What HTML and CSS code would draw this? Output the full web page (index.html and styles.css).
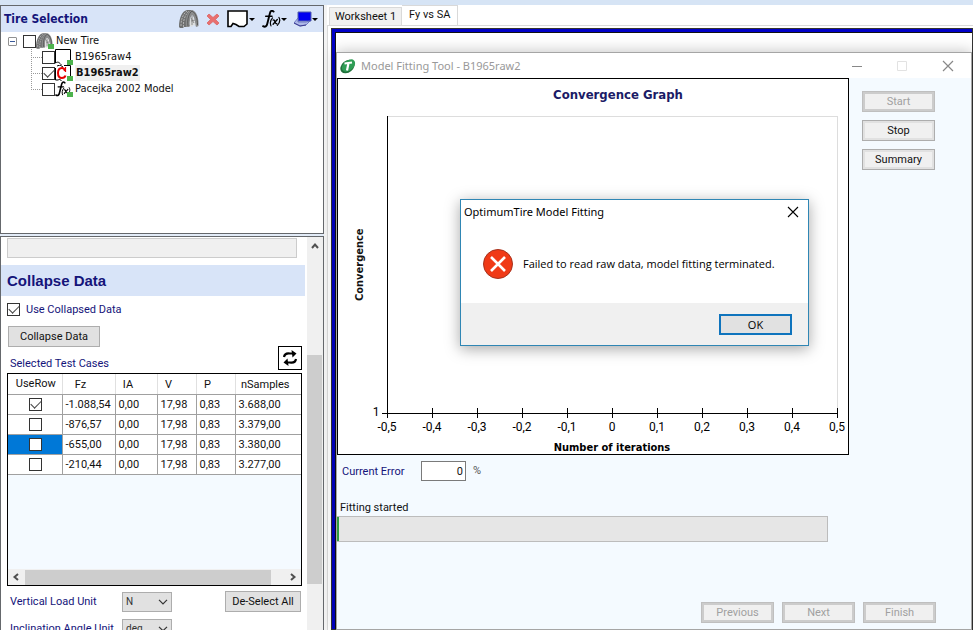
FILE: index.html
```html
<!DOCTYPE html>
<html lang="en">
<head>
<meta charset="utf-8">
<title>OptimumTire</title>
<link rel="stylesheet" href="styles.css">
</head>
<body>
<svg class="defs" aria-hidden="true">
  <symbol id="tire" viewBox="0 0 20 18">
    <path d="M0 17C0 8 3 1 8 0h5c-4 3-6 9-5 17H5l-1 1H1z" fill="#6f7070"/>
    <path d="M2 16C2 9 4 4 8 1M4.500 17C4 10 6 5 10 1" fill="none" stroke="#b5b5b5" stroke-width="1" stroke-dasharray="2 1"/>
    <path d="M7 17C6 8 9 1 13 0c5 1 7 9 6.500 16l-2 1-1-1C16 10 15 6 13 5.500 11 7 10.500 12 11 16l-1 1z" fill="#8b8c8c"/>
    <path d="M11 16c-.5-5 .5-9 2-10.500C15 7 16 11 16.500 16l-2-1-1.500 2z" fill="#dcdede"/>
    <path d="M9 16c-1-7 1-13 4-15 4 2 5.500 8 5.500 14" fill="none" stroke="#4c4d4d" stroke-width=".8"/>
    <path d="M13 6v9M12 11l4-1M12 8l3 5" stroke="#777" stroke-width=".8"/>
  </symbol>
  <symbol id="fx" viewBox="0 0 18 17">
    <g fill="none" stroke="#000" stroke-linecap="round">
      <path d="M11 1.500C9.500-.2 8 1 7.500 3L5 13c-.5 2.500-2 3.500-4 2.300" stroke-width="1.800"/>
      <path d="M3.500 6h6" stroke-width="1.400"/>
      <path d="M10 7.500c-2 2-2.500 5-1.500 7.500M16 7c1.500 2.500.5 5.500-1.500 7.500" stroke-width="1.100"/>
      <path d="M10.500 9.500c2-1 1.500 4 3.500 3.500M14.500 9l-4 4.500" stroke-width="1.300"/>
    </g>
  </symbol>
  <symbol id="page" viewBox="0 0 22 18">
    <path d="M1 1h19v13l-3 2.500h-5L9 14.500 6 13.500 4 16.500H1z" fill="#fff" stroke="#000" stroke-width="1.600"/>
  </symbol>
  <symbol id="chevron" viewBox="0 0 10 6"><path d="M1 .8l4 4 4-4" fill="none" stroke="currentColor" stroke-width="1.200"/></symbol>
  <symbol id="arrow" viewBox="0 0 8 8"><path d="M1 6l3-3.500L7 6" fill="none" stroke="currentColor" stroke-width="2"/></symbol>
</svg>

<div class="app">
  <aside class="sidebar">
    <section class="panel">
      <header class="panel-head">
        <h2>Tire Selection</h2>
        <div class="tools">
          <button aria-label="New tire"><svg width="20" height="18"><use href="#tire"/></svg></button>
          <button aria-label="Delete"><svg width="14" height="13" viewBox="0 0 14 13"><path d="M3 1l4 3.500L11 1l2 2-3.500 3.500L13 10l-2 2-4-3.500L3 12l-2-2 3.500-3.500L1 3z" fill="#e8706f" stroke="#dc6465" stroke-width=".8"/></svg></button>
          <button class="drop" aria-label="Data"><svg width="22" height="18"><use href="#page"/></svg></button>
          <button class="drop" aria-label="Function"><svg width="19" height="18"><use href="#fx"/></svg></button>
          <button class="drop" aria-label="Display"><svg width="18" height="16" viewBox="0 0 18 16"><path d="M4 1h13v9H4z" fill="#0000f0" stroke="#5560a8"/><path d="M0 12l4-5v4h8l4-1-4 4-6 1z" fill="#aeb8e8" stroke="#5a67b8" stroke-width=".8"/><path d="M0 12l6 3 6-1" fill="none" stroke="#3b3b90"/></svg></button>
        </div>
      </header>
      <ul class="tree">
        <li>
          <div class="node">
            <span class="expander"></span>
            <input type="checkbox" id="n0">
            <span class="node-icon"><svg width="17" height="16"><use href="#tire"/></svg></span>
            <label for="n0">New Tire</label>
          </div>
          <ul>
            <li class="node">
              <input type="checkbox" id="n1">
              <span class="node-icon"><svg width="16" height="16" viewBox="0 0 16 16"><path d="M.5.500h15V16M.5.500V14c3-2 4 0 6 2" fill="#fff" stroke="#000"/></svg></span>
              <label for="n1">B1965raw4</label>
            </li>
            <li class="node selected">
              <input type="checkbox" id="n2" checked>
              <span class="node-icon"><svg width="16" height="16" viewBox="0 0 16 16"><path d="M.5 3v12h3l1-1 2 2M2 1l3-1 3 2M9 .5h6.500V12" fill="none" stroke="#000"/><path d="M10 6c-.5-2-1.500-3-3-3C4.500 3 3 5 3 8s1.500 5 4 5c1.500 0 3-1 3.500-2.500" fill="none" stroke="#e60000" stroke-width="2"/><path d="M10.500 2v5" stroke="#e60000" stroke-width="1.200"/></svg></span>
              <label for="n2">B1965raw2</label>
            </li>
            <li class="node">
              <input type="checkbox" id="n3">
              <span class="node-icon"><svg width="16" height="16"><use href="#fx"/></svg></span>
              <label for="n3">Pacejka 2002 Model</label>
            </li>
          </ul>
        </li>
      </ul>
    </section>

    <section class="panel settings">
      <div class="form">
        <input class="readout" type="text" aria-label="Value" disabled>
        <h2 class="band">Collapse Data</h2>
        <div class="fields">
          <div class="check-line"><input type="checkbox" id="ucd" checked><label for="ucd">Use Collapsed Data</label></div>
          <button class="btn flat collapse">Collapse Data</button>
          <div class="cases-head">
            <span>Selected Test Cases</span>
            <button class="refresh" aria-label="Refresh"><svg width="16" height="16" viewBox="0 0 16 16"><g fill="none" stroke="#000" stroke-width="2.200"><path d="M2 7c.5-3 3-4 6-3.500h4"/><path d="M14 9c-.5 3-3 4-6 3.500H4"/></g><path d="M9.500 0l5 3.500-4 4zM6.500 16l-5-3.500 4-4z"/></svg></button>
          </div>
          <div class="grid-box">
            <table>
              <thead><tr><th class="c-use">UseRow</th><th class="c-fz">Fz</th><th class="c-ia">IA</th><th class="c-v">V</th><th class="c-p">P</th><th class="c-n">nSamples</th></tr></thead>
              <tbody>
                <tr><td><input type="checkbox" aria-label="Use row 1" checked></td><td>-1.088,54</td><td>0,00</td><td>17,98</td><td>0,83</td><td>3.688,00</td></tr>
                <tr><td><input type="checkbox" aria-label="Use row 2"></td><td>-876,57</td><td>0,00</td><td>17,98</td><td>0,83</td><td>3.379,00</td></tr>
                <tr><td class="current"><input type="checkbox" aria-label="Use row 3"></td><td>-655,00</td><td>0,00</td><td>17,98</td><td>0,83</td><td>3.380,00</td></tr>
                <tr><td><input type="checkbox" aria-label="Use row 4"></td><td>-210,44</td><td>0,00</td><td>17,98</td><td>0,83</td><td>3.277,00</td></tr>
              </tbody>
            </table>
            <div class="hbar">
              <svg class="left" width="8" height="8"><use href="#arrow"/></svg>
              <span class="track"><span class="thumb"></span></span>
              <svg class="right" width="8" height="8"><use href="#arrow"/></svg>
            </div>
          </div>
          <div class="unit-line">
            <label for="vlu">Vertical Load Unit</label>
            <span class="select"><select id="vlu"><option>N</option></select><svg width="10" height="6"><use href="#chevron"/></svg></span>
            <button class="btn flat deselect">De-Select All</button>
          </div>
          <div class="unit-line">
            <label for="iau">Inclination Angle Unit</label>
            <span class="select"><select id="iau"><option>deg</option></select><svg width="10" height="6"><use href="#chevron"/></svg></span>
          </div>
        </div>
      </div>
      <div class="vbar">
        <svg width="8" height="8"><use href="#arrow"/></svg>
        <span class="thumb"></span>
      </div>
    </section>
  </aside>

  <main class="work">
    <nav class="tabs">
      <a href="#ws1">Worksheet 1</a>
      <a href="#fysa" class="active">Fy vs SA</a>
    </nav>
    <div class="page">
      <div class="sheet">
        <section class="window">
          <header class="titlebar">
            <svg width="16" height="16" viewBox="0 0 16 16"><ellipse cx="7.500" cy="8.500" rx="8" ry="5.800" transform="rotate(-40 7.500 8.500)" fill="#20713b"/><ellipse cx="8.500" cy="7.500" rx="7.500" ry="5" transform="rotate(-40 8.500 7.500)" fill="#2f9d55"/><path d="M4.500 5.500l7.500-1M8.500 5l-1.500 7.500" stroke="#fff" stroke-width="2.200"/></svg>
            <h1>Model Fitting Tool - B1965raw2</h1>
            <svg class="controls" width="102" height="12" viewBox="0 0 102 12" fill="none"><path d="M0 6.500h10" stroke="#888"/><path d="M45.500 1.500h9v9h-9z" stroke="#e2e2e2"/><path d="M91 1l10 10M101 1L91 11" stroke="#888" stroke-width="1.200"/></svg>
          </header>
          <div class="body">
            <div class="top">
              <figure class="chart">
                <figcaption>Convergence Graph</figcaption>
                <div class="plot-row">
                  <span class="y-title">Convergence</span>
                  <svg class="plot" height="330">
                    <g class="frame"><line x1="0" y1="0.500" x2="100%" y2="0.500"/><line x1="100%" y1="0" x2="100%" y2="297"/></g>
                    <g class="axis">
                      <line x1="0" y1="0" x2="0" y2="302"/><line x1="-5" y1="297" x2="100%" y2="297"/>
                      <line x1="10%" x2="10%" y1="292" y2="302"/><line x1="20%" x2="20%" y1="292" y2="302"/><line x1="30%" x2="30%" y1="292" y2="302"/><line x1="40%" x2="40%" y1="292" y2="302"/><line x1="50%" x2="50%" y1="292" y2="302"/><line x1="60%" x2="60%" y1="292" y2="302"/><line x1="70%" x2="70%" y1="292" y2="302"/><line x1="80%" x2="80%" y1="292" y2="302"/><line x1="90%" x2="90%" y1="292" y2="302"/><line x1="100%" x2="100%" y1="292" y2="302"/>
                    </g>
                    <g class="ticks">
                      <text x="-11" y="300">1</text>
                      <text x="0" y="315">-0,5</text><text x="10%" y="315">-0,4</text><text x="20%" y="315">-0,3</text><text x="30%" y="315">-0,2</text><text x="40%" y="315">-0,1</text><text x="50%" y="315">0</text><text x="60%" y="315">0,1</text><text x="70%" y="315">0,2</text><text x="80%" y="315">0,3</text><text x="90%" y="315">0,4</text><text x="100%" y="315">0,5</text>
                    </g>
                    <text class="x-title" x="50%" y="335">Number of iterations</text>
                  </svg>
                </div>
              </figure>
              <div class="side">
                <button class="btn" disabled>Start</button>
                <button class="btn">Stop</button>
                <button class="btn">Summary</button>
              </div>
            </div>
            <div class="error-line">
              <label for="err">Current Error</label>
              <input id="err" type="text" value="0">
              <span class="unit">%</span>
            </div>
            <p class="status">Fitting started</p>
            <div class="progress"><span class="done"></span></div>
            <footer class="wizard">
              <button class="btn" disabled>Previous</button>
              <button class="btn" disabled>Next</button>
              <button class="btn" disabled>Finish</button>
            </footer>
          </div>
          <div class="dialog" role="alertdialog" aria-labelledby="dt">
            <header>
              <h2 id="dt">OptimumTire Model Fitting</h2>
              <button class="close" aria-label="Close"><svg width="12" height="12" viewBox="0 0 12 12"><path d="M1 1l10 10M11 1L1 11" stroke="#000" stroke-width="1.100"/></svg></button>
            </header>
            <div class="message">
              <svg width="30" height="30" viewBox="0 0 30 30"><circle cx="15" cy="15" r="14.500" fill="#f03a17" stroke="#a5331f"/><path d="M8 8l14 14M22 8L8 22" stroke="#fff" stroke-width="2.600"/></svg>
              <p>Failed to read raw data, model fitting terminated.</p>
            </div>
            <footer><button class="ok">OK</button></footer>
          </div>
        </section>
      </div>
    </div>
  </main>
</div>
</body>
</html>
```
FILE: styles.css
```css
* { box-sizing: border-box; }

:root {
  --ui: Roboto, "Liberation Sans", sans-serif;
  --tahoma: "DejaVu Sans Condensed", "DejaVu Sans", sans-serif;
  --segoe: "Open Sans", "Noto Sans", sans-serif;
  --title: "Noto Sans", "Open Sans", sans-serif;
  --navy: #14147a;
  --band: #d8e4f8;
  --pale: #f4faff;
}

body {
  margin: 0;
  height: 100vh;
  overflow: hidden;
  background: #f4f4f4;
  color: #111;
  font: 11px/16px var(--ui);
}

h1, h2, p, ul, figure { margin: 0; padding: 0; }
ul { list-style: none; }
button, input, select { font: inherit; color: inherit; margin: 0; }
button { padding: 0; }
svg { display: block; flex: none; }
.defs { position: absolute; width: 0; height: 0; }

.app {
  display: grid;
  grid-template-columns: 324px minmax(0, 1fr);
  height: 100vh;
  border-top: 5px solid #d6e4f5;
}

/* sidebar */
.sidebar { display: flex; flex-direction: column; gap: 2px; min-height: 0; background: #e3ecf8; }
.panel { height: 229px; flex: none; border: 1px solid #65686c; background: #fff; }
.panel-head {
  display: flex;
  align-items: center;
  justify-content: space-between;
  height: 26px;
  padding: 0 5px 0 3px;
  background: var(--band);
}
.panel-head h2 { font: bold 12px/16px var(--tahoma); color: var(--navy); }
.tools { display: flex; align-items: center; gap: 7px; }
.tools button { display: flex; align-items: center; border: 0; background: none; }
.drop::after {
  content: "";
  border: 3px solid transparent;
  border-top-color: #000;
  border-bottom: 0;
}

input[type="checkbox"] {
  appearance: none;
  display: block;
  flex: none;
  width: 13px;
  height: 13px;
  border: 1px solid #333;
  background: #fff;
}
input[type="checkbox"]:checked::before {
  content: "";
  display: block;
  width: 9px;
  height: 5px;
  margin: 2px 1px;
  border: solid #444;
  border-width: 0 0 1px 1px;
  transform: translateY(-1px) rotate(-45deg);
}

.tree { padding: 1px 0 0 7px; font-family: var(--tahoma); }
.node { display: flex; align-items: center; height: 16px; }
.expander {
  width: 9px;
  height: 9px;
  margin-right: 6px;
  border: 1px solid #919191;
  border-radius: 1px;
  background: linear-gradient(#3b5a9a, #3b5a9a) center / 5px 1px no-repeat, #fff;
}
.tree ul { margin-left: 23px; }
.tree ul .node::before {
  content: "";
  width: 11px;
  height: 16px;
  background:
    repeating-linear-gradient(90deg, #999 0 1px, transparent 1px 2px) 0 8px / 11px 1px no-repeat,
    repeating-linear-gradient(#999 0 1px, transparent 1px 2px) 0 0 / 1px 16px no-repeat;
}
.tree ul .node:last-child::before { background-size: 11px 1px, 1px 8px; }
.node-icon { position: relative; width: 18px; height: 16px; margin-right: 2px; }
.node-icon::after {
  content: "";
  position: absolute;
  right: 0;
  bottom: 0;
  width: 6px;
  height: 5px;
  background: #4db34d;
}
.selected label { padding: 0 1px; background: #f0f0f0; font-weight: bold; }

.settings { display: flex; flex: 1; height: auto; min-height: 0; border-bottom: 0; overflow: hidden; }
.form { flex: 1; min-width: 0; color: var(--navy); }
.readout { display: block; width: 290px; height: 20px; margin: 1px 0 7px 6px; border: 1px solid #ccc; background: #f0f0f0; }
.band { height: 31px; margin-right: 2px; padding-left: 6px; background: var(--band); font: bold 15px/32px "Liberation Sans", sans-serif; }
.fields { padding: 7px 5px 0 6px; }
.check-line { display: flex; align-items: center; gap: 6px; height: 13px; }
.btn {
  width: 73px;
  height: 21px;
  padding-top: 1px;
  border: 1px solid #adadad;
  background: #f0f0f0;
  box-shadow: inset 0 0 0 2px #e1e1e1;
  color: #111;
}
.btn:disabled { color: #a0a0a0; border-color: #bfbfbf; box-shadow: inset 0 0 0 2px #ccc; }
.flat { background: #e1e1e1; }
.collapse { display: block; width: 92px; margin: 10px 0 0 1px; }
.cases-head { display: flex; align-items: flex-end; justify-content: space-between; height: 23px; padding-left: 3px; }
.cases-head span { margin-bottom: -2px; }
.refresh { display: grid; place-items: center; width: 24px; height: 24px; border: 1px solid #000; background: #fff; }

.grid-box { display: flex; flex-direction: column; height: 213px; margin-top: 3px; border: 1px solid #000; background: var(--pale); color: #111; overflow: hidden; }
table { width: 100%; border-collapse: collapse; table-layout: fixed; background: #fff; }
th { height: 20px; padding: 2px 0 0; border-left: 1px solid #e0e0e0; border-bottom: 1px solid #a0a0a0; font-weight: normal; }
td { height: 20px; padding: 2px 0 0 3px; border: 1px solid #a0a0a0; line-height: 16px; }
tr > :first-child { border-left: 0; padding: 0 0 0 2px; }
tr > :last-child { border-right: 0; }
td input[type="checkbox"] { margin: 0 auto; }
.current { background: #0078d7; }
.c-use { width: 54px; }
.c-fz { width: 53px; padding-right: 16px; }
.c-ia { width: 42px; padding-right: 16px; }
.c-v { width: 39px; padding-right: 16px; }
.c-p { width: 39px; padding-right: 16px; }
.c-n { padding-right: 6px; }
.hbar { display: flex; align-items: center; gap: 5px; height: 16px; margin-top: auto; padding: 0 4px; background: #f0f0f0; color: #505050; }
.track { flex: 1; height: 15px; }
.track .thumb { display: block; width: 95%; height: 15px; background: #cdcdcd; }
.left { transform: rotate(-90deg); }
.right { transform: rotate(90deg); }

.unit-line { display: flex; align-items: center; height: 21px; margin: 5px 0 6px; padding: 0 1px 0 3px; }
.unit-line label { width: 112px; padding-top: 1px; }
.select { display: flex; align-items: center; color: #333; }
.select select { appearance: none; width: 50px; height: 20px; padding: 0 3px; border: 1px solid #adadad; border-radius: 0; background: #e1e1e1; font-size: 10px; }
.select svg { margin-left: -14px; margin-right: 4px; pointer-events: none; }
.deselect { width: 76px; margin-left: auto; }

.vbar { display: flex; flex-direction: column; align-items: center; gap: 105px; width: 16px; padding-top: 5px; background: #f0f0f0; color: #505050; }
.vbar .thumb { align-self: flex-start; width: 15px; height: 229px; background: #cdcdcd; }

/* worksheet area */
.work { display: flex; flex-direction: column; min-width: 0; padding-left: 3px; }
.tabs { display: flex; align-items: flex-end; height: 20px; padding-left: 2px; background: #fff; }
.tabs a { height: 18px; padding: 1px 5px 0; border: 1px solid #d9d9d9; border-bottom: 0; background: #f0f0f0; color: inherit; text-decoration: none; }
.tabs .active { height: 20px; padding: 1px 7px 0; border-left: 0; background: #fff; }
.page { flex: 1; min-height: 0; padding: 2px 0 0 3px; border: solid #d9d9d9; border-width: 1px 0 0 1px; background: #fff; }
.sheet { height: 100%; padding: 20px 1px 0 0; border: solid #0000c8; border-width: 4px 0 0 4px; background: #fff; outline: 1px solid #333; outline-offset: -1px; box-shadow: inset 1px 1px #111; }

.window { position: relative; display: flex; flex-direction: column; height: 100%; margin-left: 1px; border: 1px solid #a5a5a5; background: var(--pale); box-shadow: 0 0 14px rgba(0, 0, 0, .25); }
.titlebar { display: flex; align-items: center; gap: 5px; height: 25px; padding: 0 17px 0 3px; background: #fff; }
.titlebar h1 { flex: 1; font: 11px/16px var(--title); color: #999; }
.body { display: flex; flex: 1; flex-direction: column; min-height: 0; }
.top { display: flex; }
.chart { flex: 1; min-width: 0; height: 377px; border: 1px solid #000; background: #fff; }
.chart figcaption { padding: 7px 0 13px; padding-left: 50px; text-align: center; font: bold 13px/17px var(--tahoma); color: #1b1b66; }
.plot-row { display: flex; padding-right: 11px; }
.y-title { width: 16px; height: 297px; margin: 0 19px 0 14px; writing-mode: vertical-rl; transform: rotate(180deg); text-align: center; font: bold 11px/16px var(--tahoma); }
.plot { flex: 1; min-width: 0; overflow: visible; }
.plot line { stroke: #000; stroke-width: 1; shape-rendering: crispEdges; }
.plot .frame line { stroke: #ddd; }
.plot text { text-anchor: middle; font: 12px var(--ui); }
.plot .x-title { font: bold 11px var(--tahoma); }
.side { display: flex; flex-direction: column; gap: 8px; padding: 13px 36px 0 13px; }
.error-line { display: flex; align-items: center; height: 20px; margin-top: 6px; padding-left: 5px; }
.error-line label { width: 79px; padding-top: 1px; color: var(--navy); }
.error-line input { width: 45px; height: 20px; margin-right: 7px; padding: 0 2px; border: 1px solid #7a7a7a; background: #fff; text-align: right; }
.unit { color: #555; }
.status { margin: 19px 0 0; padding-left: 3px; }
.progress { height: 26px; margin-right: 143px; border: 1px solid #bcbcbc; border-left: 0; background: #e6e6e6; }
.done { display: block; width: 2px; height: 24px; background: #2f9d3f; }
.wizard { display: flex; justify-content: flex-end; gap: 8px; margin: auto 35px 6px 0; }

/* message box floats above the window */
.dialog { position: absolute; top: 146px; left: 123px; width: 349px; border: 1px solid #2f86b4; background: #fff; box-shadow: 0 3px 14px rgba(0, 0, 0, .35); font: 11px/16px var(--segoe); color: #000; }
.dialog header { display: flex; align-items: center; justify-content: space-between; height: 24px; padding: 0 9px 0 3px; }
.dialog h2 { font: 11px/16px var(--title); }
.close { border: 0; background: none; }
.message { display: flex; align-items: center; gap: 10px; height: 79px; padding: 0 22px; }
.dialog footer { display: flex; justify-content: flex-end; padding: 11px 16px 10px; background: #f0f0f0; }
.ok { width: 73px; height: 21px; border: 2px solid #0f74bd; background: #e1e1e1; line-height: 16px; }
```
